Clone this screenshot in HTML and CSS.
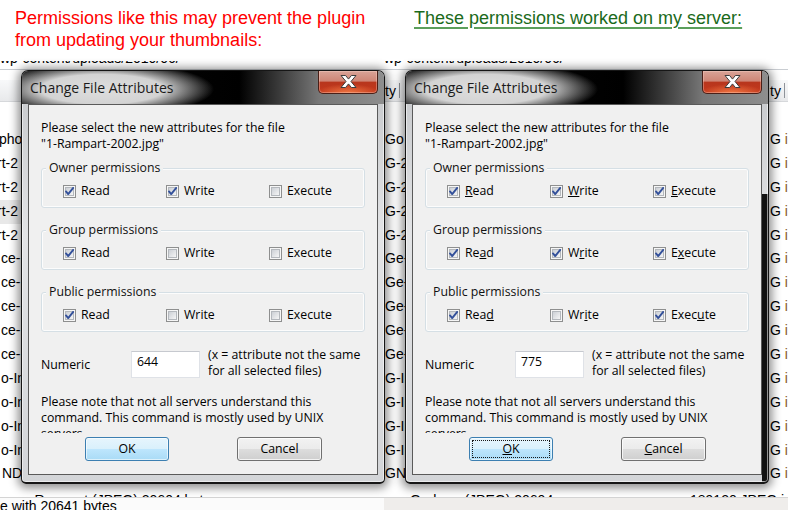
FILE: index.html
```html
<!DOCTYPE html>
<html lang="en">
<head>
<meta charset="utf-8">
<title>File permissions</title>
<link rel="stylesheet" href="styles.css">
</head>
<body>
<svg class="defs" width="0" height="0" aria-hidden="true">
  <defs>
    <linearGradient id="cbfill" x1="0" y1="0" x2="1" y2="1">
      <stop offset="0" stop-color="#c9cdd3"/>
      <stop offset="1" stop-color="#f8f8f8"/>
    </linearGradient>
    <symbol id="cb-off" viewBox="0 0 13 13">
      <rect x="0.5" y="0.5" width="12" height="12" fill="#f6f6f6" stroke="#8e8f8f"/>
      <rect x="2.5" y="2.5" width="8" height="8" fill="url(#cbfill)" stroke="#b4b8bd"/>
    </symbol>
    <symbol id="cb-on" viewBox="0 0 13 13">
      <rect x="0.5" y="0.5" width="12" height="12" fill="#f6f6f6" stroke="#8e8f8f"/>
      <rect x="2.5" y="2.5" width="8" height="8" fill="url(#cbfill)" stroke="#b4b8bd"/>
      <path d="M3 6.4 L5.2 9.1 L10.2 2.9" fill="none" stroke="#33509a" stroke-width="1.9" stroke-linecap="round" stroke-linejoin="round"/>
    </symbol>
    <symbol id="close-x" viewBox="0 0 17 13">
      <path d="M1 .5h4.6l2.9 3.6 2.9-3.6H16l-5 6 5 6h-4.6l-2.9-3.6-2.9 3.6H1l5-6z" fill="#fff" stroke="#3d3d3d" stroke-width="1"/>
    </symbol>
  </defs>
</svg>

<header class="captions">
  <p class="caption caption-bad">Permissions like this may prevent the plugin<br>from updating your thumbnails:</p>
  <p class="caption caption-good"><span class="u">These permissions worked on my server:</span></p>
</header>

<main class="stage">
  <div class="panel panel-left">
    <div class="bg">
      <div class="path"><span>/wp-content/uploads/2010/06/</span></div>
      <div class="thead"></div>
      <div class="rows">
        <div class="row"><span class="cell-a ind-1">pho</span></div>
        <div class="row"><span class="cell-a ind-4">rt-2</span></div>
        <div class="row"><span class="cell-a ind-4">rt-2</span></div>
        <div class="row sel"><span class="cell-a ind-4">rt-2</span></div>
        <div class="row"><span class="cell-a ind-4">rt-2</span></div>
        <div class="row"><span class="cell-a">ce-1</span></div>
        <div class="row"><span class="cell-a">ce-1</span></div>
        <div class="row"><span class="cell-a">ce-1</span></div>
        <div class="row"><span class="cell-a">ce-1</span></div>
        <div class="row"><span class="cell-a">ce-1</span></div>
        <div class="row"><span class="cell-a">o-In</span></div>
        <div class="row"><span class="cell-a">o-In</span></div>
        <div class="row"><span class="cell-a">o-In</span></div>
        <div class="row"><span class="cell-a">o-In</span></div>
        <div class="row"><span class="cell-a ind1">ND</span></div>
        <div class="row row-tail"><span class="cell-wide">e-Rampart (JPEG) 20604 bytes</span></div>
      </div>
      <div class="status">e with 20641 bytes</div>
    </div>

    <section class="dialog">
      <div class="titlebar">
        <span class="title">Change File Attributes</span>
        <div class="close"><svg class="close-x"><use href="#close-x"/></svg></div>
      </div>
      <div class="client">
        <p class="intro">Please select the new attributes for the file<br>"1-Rampart-2002.jpg"</p>
        <fieldset class="group">
          <legend>Owner permissions</legend>
          <div class="perm-row">
            <span class="perm"><svg class="cb"><use href="#cb-on"/></svg>Read</span>
            <span class="perm"><svg class="cb"><use href="#cb-on"/></svg>Write</span>
            <span class="perm"><svg class="cb"><use href="#cb-off"/></svg>Execute</span>
          </div>
        </fieldset>
        <fieldset class="group">
          <legend>Group permissions</legend>
          <div class="perm-row">
            <span class="perm"><svg class="cb"><use href="#cb-on"/></svg>Read</span>
            <span class="perm"><svg class="cb"><use href="#cb-off"/></svg>Write</span>
            <span class="perm"><svg class="cb"><use href="#cb-off"/></svg>Execute</span>
          </div>
        </fieldset>
        <fieldset class="group">
          <legend>Public permissions</legend>
          <div class="perm-row">
            <span class="perm"><svg class="cb"><use href="#cb-on"/></svg>Read</span>
            <span class="perm"><svg class="cb"><use href="#cb-off"/></svg>Write</span>
            <span class="perm"><svg class="cb"><use href="#cb-off"/></svg>Execute</span>
          </div>
        </fieldset>
        <div class="numeric">
          <span class="num-label">Numeric</span>
          <span class="num-input">644</span>
          <span class="num-hint">(x = attribute not the same<br>for all selected files)</span>
        </div>
        <p class="note">Please note that not all servers understand this<br>command. This command is mostly used by UNIX<br>servers.</p>
        <div class="buttons">
          <span class="btn btn-default">OK</span>
          <span class="btn btn-cancel">Cancel</span>
        </div>
      </div>
    </section>
  </div>

  <div class="panel panel-right">
    <div class="bg bg-right">
      <div class="path"><span>/wp-content/uploads/2010/06/</span></div>
      <div class="thead"><span class="cell-a">ty<i class="sep"></i></span><span class="cell-z">ty<i class="sep"></i></span></div>
      <div class="rows">
        <div class="row"><span class="cell-a">Go</span><span class="cell-z">G <b>i</b></span></div>
        <div class="row"><span class="cell-a">G-2</span><span class="cell-z">G <b>i</b></span></div>
        <div class="row"><span class="cell-a">G-2</span><span class="cell-z">G <b>i</b></span></div>
        <div class="row"><span class="cell-a">G-2</span><span class="cell-z">G <b>i</b></span></div>
        <div class="row"><span class="cell-a">G-2</span><span class="cell-z">G <b>i</b></span></div>
        <div class="row"><span class="cell-a">Ge-1</span><span class="cell-z">G <b>i</b></span></div>
        <div class="row"><span class="cell-a">Ge-1</span><span class="cell-z">G <b>i</b></span></div>
        <div class="row"><span class="cell-a">Ge-1</span><span class="cell-z">G <b>i</b></span></div>
        <div class="row"><span class="cell-a">Ge-1</span><span class="cell-z">G <b>i</b></span></div>
        <div class="row"><span class="cell-a">Ge-1</span><span class="cell-z">G <b>i</b></span></div>
        <div class="row"><span class="cell-a">G-In</span><span class="cell-z">G <b>i</b></span></div>
        <div class="row"><span class="cell-a">G-In</span><span class="cell-z">G <b>i</b></span></div>
        <div class="row"><span class="cell-a">G-In</span><span class="cell-z">G <b>i</b></span></div>
        <div class="row"><span class="cell-a">G-In</span><span class="cell-z">G <b>i</b></span></div>
        <div class="row"><span class="cell-a">GND</span><span class="cell-z">G <b>i</b></span></div>
        <div class="row row-tail"><span class="tail-a">Gorham (JPEG) 20604</span><span class="tail-b">189120 JPEG im</span></div>
      </div>
      <div class="status status-grey"></div>
    </div>

    <section class="dialog dialog-dark-right">
      <div class="titlebar">
        <span class="title">Change File Attributes</span>
        <div class="close"><svg class="close-x"><use href="#close-x"/></svg></div>
      </div>
      <div class="client">
        <p class="intro">Please select the new attributes for the file<br>"1-Rampart-2002.jpg"</p>
        <fieldset class="group">
          <legend>Owner permissions</legend>
          <div class="perm-row">
            <span class="perm"><svg class="cb"><use href="#cb-on"/></svg><span><u>R</u>ead</span></span>
            <span class="perm"><svg class="cb"><use href="#cb-on"/></svg><span><u>W</u>rite</span></span>
            <span class="perm"><svg class="cb"><use href="#cb-on"/></svg><span><u>E</u>xecute</span></span>
          </div>
        </fieldset>
        <fieldset class="group">
          <legend>Group permissions</legend>
          <div class="perm-row">
            <span class="perm"><svg class="cb"><use href="#cb-on"/></svg><span>Re<u>a</u>d</span></span>
            <span class="perm"><svg class="cb"><use href="#cb-on"/></svg><span>W<u>r</u>ite</span></span>
            <span class="perm"><svg class="cb"><use href="#cb-on"/></svg><span>E<u>x</u>ecute</span></span>
          </div>
        </fieldset>
        <fieldset class="group">
          <legend>Public permissions</legend>
          <div class="perm-row">
            <span class="perm"><svg class="cb"><use href="#cb-on"/></svg><span>Rea<u>d</u></span></span>
            <span class="perm"><svg class="cb"><use href="#cb-off"/></svg><span>Wr<u>i</u>te</span></span>
            <span class="perm"><svg class="cb"><use href="#cb-on"/></svg><span>Exec<u>u</u>te</span></span>
          </div>
        </fieldset>
        <div class="numeric">
          <span class="num-label">Numeric</span>
          <span class="num-input">775</span>
          <span class="num-hint">(x = attribute not the same<br>for all selected files)</span>
        </div>
        <p class="note">Please note that not all servers understand this<br>command. This command is mostly used by UNIX<br>servers.</p>
        <div class="buttons">
          <span class="btn btn-default btn-focus"><span><u>O</u>K</span></span>
          <span class="btn btn-cancel"><span><u>C</u>ancel</span></span>
        </div>
      </div>
    </section>
  </div>
</main>
</body>
</html>
```

FILE: styles.css
```css
* { box-sizing: border-box; }
html, body { margin: 0; padding: 0; }
body {
  width: 788px;
  height: 510px;
  overflow: hidden;
  background: #fff;
  font-family: "Liberation Sans", Arial, sans-serif;
}
.defs { position: absolute; width: 0; height: 0; overflow: hidden; }

/* captions */
.captions { display: flex; height: 61px; }
.caption { margin: 0; font-size: 18px; line-height: 22px; padding-top: 7px; }
.caption-bad { width: 414px; padding-left: 15px; color: #ff0000; }
.caption-good { color: #1b6a1b; }
.caption-good .u {
  text-decoration: underline;
  text-decoration-color: #5b9f5b;
  text-decoration-thickness: 2px;
  text-underline-offset: 3px;
}

/* stage */
.stage { display: flex; height: 449px; }
.panel {
  display: grid;
  grid-template-columns: 100%;
  grid-template-rows: 100%;
  height: 449px;
}
.panel-left { width: 384px; }
.panel-right { width: 404px; }
.panel > .bg, .panel > .dialog { grid-area: 1 / 1; }

/* background file list */
.bg {
  overflow: hidden;
  display: flex;
  flex-direction: column;
  font: 14px/16px "Liberation Sans", Arial, sans-serif;
  color: #000;
  background: #fff;
}
.path {
  height: 9px;
  flex: none;
  overflow: hidden;
  border-bottom: 1px solid #c9cdd2;
  white-space: nowrap;
}
.path span { display: block; margin-top: -11px; text-indent: -4px; line-height: 16px; }
.thead {
  flex: none;
  margin-top: 10px;
  height: 22px;
  border-bottom: 1px solid #d6d8db;
  background: linear-gradient(#f8f9fa, #e8e9eb);
  display: flex;
  justify-content: space-between;
  align-items: center;
  line-height: 16px;
}
.thead .cell-a, .thead .cell-z { display: flex; align-items: center; overflow: visible; }
.sep { display: inline-block; width: 1px; height: 15px; margin-left: 3px; background: #8f9399; }
.rows { flex: none; margin-top: 26px; height: 369px; overflow: hidden; }
.row {
  height: 23.9px;
  line-height: 23.9px;
  display: flex;
  justify-content: space-between;
  white-space: nowrap;
}
.row.sel { background: #e8e8e8; }
.cell-a { width: 21px; overflow: hidden; padding-left: 1px; }
.cell-z { width: 18px; overflow: hidden; }
.cell-z b { font-weight: normal; color: #8a5a26; }
.ind-1 { text-indent: -2px; }
.ind-4 { text-indent: -4px; }
.ind1 { padding-left: 2px; }
.cell-wide { padding-left: 22px; }
.row-tail { justify-content: flex-start; padding-top: 3px; }
.tail-a { margin-left: 26px; width: 280px; }
.tail-b { width: 98px; overflow: hidden; }
.status {
  flex: 1;
  border-top: 1px solid #d4d4d4;
  line-height: 16px;
  white-space: nowrap;
  background: #fbfbfb;
}
.status-grey { background: #efedeb; }

/* dialog window */
.dialog {
  position: relative;
  z-index: 1;
  align-self: start;
  justify-self: start;
  margin: 9px 0 0 21px;
  width: 364px;
  height: 414px;
  border: 1px solid #161616;
  border-bottom-width: 2px;
  border-radius: 7px 7px 5px 5px;
  padding: 0 6px 7px;
  background: linear-gradient(#c4c6c9, #e3e4e6 40%, #d3d5d8);
  box-shadow: inset 0 0 0 1px rgba(255,255,255,0.55), 0 1px 10px 3px rgba(0,0,0,0.45);
  overflow: hidden;
  display: flex;
  flex-direction: column;
  font-family: "Open Sans", "Noto Sans", sans-serif;
  font-size: 12.3px;
  color: #000;
}
.dialog-dark-right {
  background:
    linear-gradient(#121212, #121212) right bottom / 6px 70% no-repeat,
    linear-gradient(#c4c6c9, #e3e4e6 40%, #d3d5d8);
}
.titlebar {
  flex: none;
  height: 33px;
  margin: 0 -6px;
  padding: 0 6px 0 8px;
  display: flex;
  align-items: flex-start;
  background:
    radial-gradient(ellipse 112px 27px at 80px 55%, #dedede 0%, #d3d3d3 55%, rgba(200,200,200,0) 100%),
    linear-gradient(to right, #0a0a0a 0%, #000 60%, #3a3a3a 71%, #777 82%, #8e8e8e 100%);
}
.title { line-height: 33px; font-size: 14px; color: #1b1b1b; white-space: nowrap; }
.close {
  margin-left: auto;
  width: 60px;
  height: 23px;
  border: 1px solid #4a1f17;
  border-top: none;
  border-radius: 0 0 5px 5px;
  background:
    radial-gradient(ellipse 32px 9px at 50% 100%, rgba(255,140,80,0.75), rgba(255,140,80,0)),
    linear-gradient(#d9a397 0%, #cf8676 45%, #b8361d 52%, #c4381c 100%);
  box-shadow: inset 0 0 0 1px rgba(255,220,210,0.35);
  display: flex;
  align-items: center;
  justify-content: center;
  padding-bottom: 2px;
}
.close-x { width: 17px; height: 13px; }

.client {
  flex: none;
  height: 371px;
  border: 1px solid #5a5a5a;
  background: #f0f0f0;
  padding: 15px 12px 0;
}
.intro { margin: 0; line-height: 16px; white-space: nowrap; }
.group {
  margin: 8px 0 0;
  padding: 0;
  min-width: 0;
  border: 1px solid #d5dfe5;
  border-radius: 3px;
  box-shadow: inset 0 0 0 1px rgba(255,255,255,0.8);
}
.group + .group { margin-top: 14px; }
.group legend {
  padding: 0 3px;
  margin-left: 4px;
  line-height: 16px;
  background: #f0f0f0;
  color: #111;
}
.perm-row { display: flex; padding: 7px 0 8px 21px; }
.perm {
  flex: none;
  width: 103px;
  display: flex;
  align-items: center;
  gap: 5px;
  line-height: 16px;
  white-space: nowrap;
}
.cb { width: 13px; height: 13px; flex: none; }

.numeric { display: flex; align-items: flex-start; margin-top: 15px; }
.num-label { width: 90px; margin-top: 10px; line-height: 16px; }
.num-input {
  width: 69px;
  height: 27px;
  margin-top: 4px;
  background: #fff;
  border: 1px solid #dfe2e7;
  border-top-color: #c6c9cf;
  padding: 2px 5px;
  line-height: 16px;
}
.num-hint { margin-left: 8px; line-height: 16px; white-space: nowrap; }

.note { margin: 15px 0 0; line-height: 16px; height: 39px; overflow: hidden; white-space: nowrap; }

.buttons { display: flex; margin-top: 4px; padding-left: 44px; gap: 68px; }
.btn {
  flex: none;
  width: 84px;
  height: 24px;
  border: 1px solid #707070;
  border-radius: 3px;
  background: linear-gradient(#f2f2f2 0%, #ebebeb 50%, #dddddd 50%, #cfcfcf 100%);
  box-shadow: inset 0 0 0 1px rgba(255,255,255,0.75);
  display: flex;
  align-items: center;
  justify-content: center;
  line-height: 16px;
}
.btn-cancel { width: 85px; }
.btn-default {
  border-color: #3c7fb1;
  background: linear-gradient(#e6f5fd 0%, #d9f0fc 50%, #bee6fd 50%, #a9dbf6 100%);
  box-shadow: inset 0 0 0 1px rgba(255,255,255,0.6);
}
.btn-focus { outline: 1px dotted #1a1a1a; outline-offset: -4px; }
```
